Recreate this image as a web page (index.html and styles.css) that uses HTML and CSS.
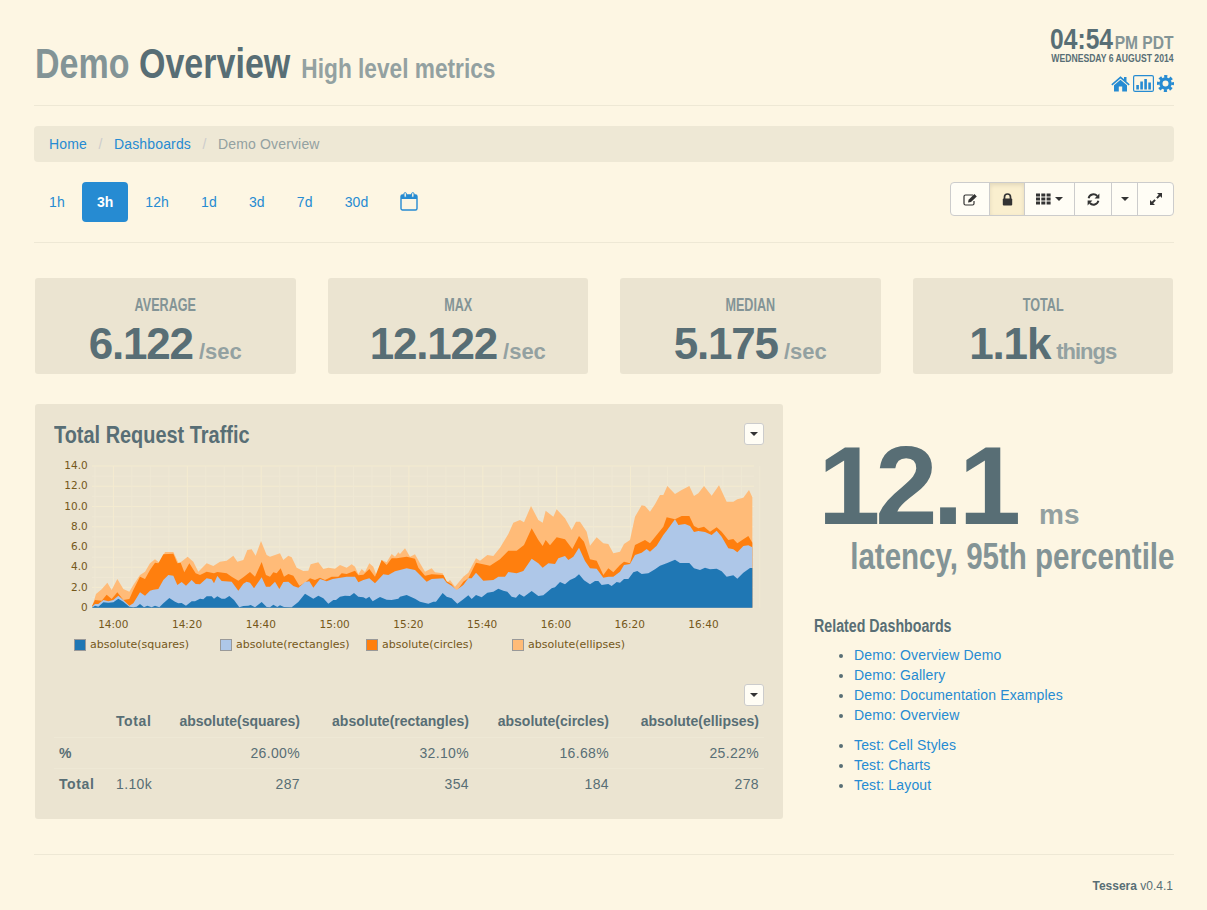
FILE: index.html
```html
<!DOCTYPE html>
<html>
<head>
  <meta charset="utf-8">
  <title>Demo Overview</title>
  <link rel="stylesheet" href="styles.css">
</head>
<body>
  <div id="page">
    <header class="page-head">
      <h1 class="page-title"><span class="muted">Demo</span> Overview <small>High level metrics</small></h1>
      <div class="clock">
        <div class="clock-text">
          <div class="clock-time">04:54<span>PM PDT</span></div>
          <div class="clock-date">WEDNESDAY 6 AUGUST 2014</div>
        </div>
        <div class="clock-icons">
          <svg class="ico-home" width="19" height="17" viewBox="0 0 19 17"><path d="M0.3 9.2 L9.5 1.2 L13 4.2 V2 H15.5 V6.4 L18.7 9.2 L17.7 10.4 L9.5 3.4 L1.3 10.4 Z"/><path d="M3 10.2 L9.5 4.8 L16 10.2 V16.4 H11.2 V11.6 H7.8 V16.4 H3 Z"/></svg>
          <svg class="ico-bars" width="21" height="17" viewBox="0 0 21 17"><rect x="0.6" y="0.6" width="19.8" height="15.8" rx="1.5" fill="none" stroke="#268bd2" stroke-width="1.2"/><rect x="3.3" y="10" width="2.6" height="4.5"/><rect x="7.3" y="6.5" width="2.6" height="8"/><rect x="11.3" y="4" width="2.6" height="10.5"/><rect x="15.3" y="7.5" width="2.6" height="7"/></svg>
          <svg class="ico-cog" width="17" height="17" viewBox="0 0 17 17"><circle cx="8.5" cy="8.5" r="4.6" fill="none" stroke="#268bd2" stroke-width="3.2"/><circle cx="8.5" cy="8.5" r="7.1" fill="none" stroke="#268bd2" stroke-width="2.8" stroke-dasharray="3.1 2.48" stroke-dashoffset="1.55"/></svg>
        </div>
      </div>
    </header>

    <ul class="breadcrumb">
      <li><a href="#">Home</a></li>
      <li><a href="#">Dashboards</a></li>
      <li class="current">Demo Overview</li>
    </ul>

    <div class="toolbar">
      <ul class="pills">
        <li><a href="#">1h</a></li>
        <li class="active"><a href="#">3h</a></li>
        <li><a href="#">12h</a></li>
        <li><a href="#">1d</a></li>
        <li><a href="#">3d</a></li>
        <li><a href="#">7d</a></li>
        <li><a href="#">30d</a></li>
        <li><a href="#" class="cal-link"><svg width="18" height="19" viewBox="0 0 18 19"><rect x="1" y="3" width="16" height="15" rx="1.5" fill="none" stroke="#268bd2" stroke-width="1.4"/><rect x="1" y="3" width="16" height="4" fill="#268bd2"/><rect x="4" y="0.7" width="2.4" height="4.6" rx="1" fill="#fdf6e3" stroke="#268bd2"/><rect x="11.6" y="0.7" width="2.4" height="4.6" rx="1" fill="#fdf6e3" stroke="#268bd2"/></svg></a></li>
      </ul>
      <div class="btn-group">
        <button class="btn w-edit"><svg width="15" height="13" viewBox="0 0 15 13"><path d="M10 2 H2.5 A1.5 1.5 0 0 0 1 3.5 V10.5 A1.5 1.5 0 0 0 2.5 12 H9.5 A1.5 1.5 0 0 0 11 10.5 V8" fill="none" stroke="#333" stroke-width="1.2"/><path d="M5 9.4 L5.6 6.8 L11.4 1 L13.8 3.4 L8 9 Z" fill="#333"/></svg></button>
        <button class="btn w-lock active"><svg width="11" height="13" viewBox="0 0 11 13"><path d="M2.5 6 V4 A3 3 0 0 1 8.5 4 V6" fill="none" stroke="#333" stroke-width="1.7"/><rect x="0.8" y="5.6" width="9.4" height="6.9" rx="1" fill="#333"/></svg></button>
        <button class="btn w-grid"><svg width="15" height="12" viewBox="0 0 15 12"><g fill="#333"><rect x="0" y="0.5" width="4" height="3"/><rect x="5.3" y="0.5" width="4" height="3"/><rect x="10.6" y="0.5" width="4" height="3"/><rect x="0" y="4.5" width="4" height="3"/><rect x="5.3" y="4.5" width="4" height="3"/><rect x="10.6" y="4.5" width="4" height="3"/><rect x="0" y="8.5" width="4" height="3"/><rect x="5.3" y="8.5" width="4" height="3"/><rect x="10.6" y="8.5" width="4" height="3"/></g></svg><span class="caret"></span></button>
        <button class="btn w-refresh"><svg width="13" height="13" viewBox="0 0 13 13"><path d="M1.6 5.2 A5 5 0 0 1 10.2 3" fill="none" stroke="#333" stroke-width="1.9"/><path d="M12.4 0.6 V5.4 H7.6 Z" fill="#333"/><path d="M11.4 7.8 A5 5 0 0 1 2.8 10" fill="none" stroke="#333" stroke-width="1.9"/><path d="M0.6 12.4 V7.6 H5.4 Z" fill="#333"/></svg></button>
        <button class="btn w-caret"><span class="caret"></span></button>
        <button class="btn w-expand"><svg width="12" height="12" viewBox="0 0 12 12"><path d="M7 0 H12 V5 L10.2 3.2 L7.6 5.8 L6.2 4.4 L8.8 1.8 Z" fill="#333"/><path d="M5 12 H0 V7 L1.8 8.8 L4.4 6.2 L5.8 7.6 L3.2 10.2 Z" fill="#333"/></svg></button>
      </div>
    </div>

    <section class="stats">
      <div class="stat"><h3>AVERAGE</h3><div class="stat-value">6.122 <span>/sec</span></div></div>
      <div class="stat"><h3>MAX</h3><div class="stat-value">12.122 <span>/sec</span></div></div>
      <div class="stat"><h3>MEDIAN</h3><div class="stat-value">5.175 <span>/sec</span></div></div>
      <div class="stat"><h3>TOTAL</h3><div class="stat-value">1.1k <span class="things">things</span></div></div>
    </section>

    <div class="main-row">
      <section class="panel">
        <div class="panel-head">
          <h2>Total Request Traffic</h2>
          <button class="mini-btn"><span class="caret"></span></button>
        </div>
        <svg id="traffic-chart" width="710" height="175" viewBox="72 165 2130 525"></svg>
        <div class="legend">
          <span class="legend-item"><i class="swatch c-squares"></i>absolute(squares)</span>
          <span class="legend-item"><i class="swatch c-rectangles"></i>absolute(rectangles)</span>
          <span class="legend-item"><i class="swatch c-circles"></i>absolute(circles)</span>
          <span class="legend-item"><i class="swatch c-ellipses"></i>absolute(ellipses)</span>
        </div>
        <div class="table-tools"><button class="mini-btn"><span class="caret"></span></button></div>
        <table class="summary">
          <thead>
            <tr><th class="col-name"></th><th class="col-total left">Total</th><th class="col-a">absolute(squares)</th><th class="col-b">absolute(rectangles)</th><th class="col-c">absolute(circles)</th><th class="col-d">absolute(ellipses)</th></tr>
          </thead>
          <tbody>
            <tr><th class="left">%</th><td class="left"></td><td>26.00%</td><td>32.10%</td><td>16.68%</td><td>25.22%</td></tr>
            <tr><th class="left">Total</th><td class="left">1.10k</td><td>287</td><td>354</td><td>184</td><td>278</td></tr>
          </tbody>
        </table>
      </section>

      <aside class="side">
        <div class="big-number">12.1 <span>ms</span></div>
        <div class="big-label"><span>latency, 95th percentile</span></div>
        <h4>Related Dashboards</h4>
        <ul class="links">
          <li><a href="#">Demo: Overview Demo</a></li>
          <li><a href="#">Demo: Gallery</a></li>
          <li><a href="#">Demo: Documentation Examples</a></li>
          <li><a href="#">Demo: Overview</a></li>
        </ul>
        <ul class="links">
          <li><a href="#">Test: Cell Styles</a></li>
          <li><a href="#">Test: Charts</a></li>
          <li><a href="#">Test: Layout</a></li>
        </ul>
      </aside>
    </div>

    <footer class="page-foot"><strong>Tessera</strong> v0.4.1</footer>
  </div>
  <script src="chart.js"></script>
</body>
</html>
```

FILE: styles.css
```css
* {
  box-sizing: border-box;
}
body {
  margin: 0;
  background-color: #fdf6e3;
  color: #586e75;
  font-family: "Liberation Sans", Arial, sans-serif;
  font-size: 14px;
  line-height: 20px;
  letter-spacing: 0.15px;
}
a {
  color: #268bd2;
  text-decoration: none;
}
#page {
  width: 1140px;
  margin-left: 34px;
}

/* header */
.page-head {
  display: flex;
  justify-content: space-between;
  height: 106px;
  border-bottom: 1px solid #eee8d5;
}
.page-title {
  margin: 41px 0 0 1px;
  color: #586e75;
  font-size: 42px;
  line-height: 46px;
  font-weight: bold;
  letter-spacing: 0;
  transform: scaleX(0.81);
  transform-origin: left;
}
.page-title .muted {
  color: #839496;
}
.page-title small {
  margin-left: 2px;
  color: #93a1a1;
  font-size: 28px;
}
.clock {
  padding-top: 24px;
  text-align: right;
}
.clock-text {
  font-weight: bold;
  letter-spacing: 0;
  transform: scaleX(0.82);
  transform-origin: right;
}
.clock-time {
  font-size: 30px;
  line-height: 29px;
}
.clock-time span {
  margin-left: 2px;
  color: #839496;
  font-size: 19px;
  line-height: 1;
}
.clock-date {
  font-size: 10.5px;
  line-height: 10px;
}
.clock-icons {
  display: flex;
  justify-content: flex-end;
  gap: 3px;
  margin-top: 12px;
}
.clock-icons svg {
  fill: #268bd2;
}

/* breadcrumb */
.breadcrumb {
  display: flex;
  height: 36px;
  margin: 20px 0;
  padding: 8px 15px;
  list-style: none;
  background: #eee8d5;
  border-radius: 4px;
}
.breadcrumb li + li::before {
  content: "/";
  padding: 0 11.5px;
  color: #ccc;
}
.breadcrumb .current {
  color: #93a1a1;
}

/* time range and buttons */
.toolbar {
  display: flex;
  justify-content: space-between;
  align-items: flex-start;
  height: 61px;
  border-bottom: 1px solid #eee8d5;
}
.pills {
  display: flex;
  gap: 2px;
  margin: 0;
  padding: 0;
  list-style: none;
}
.pills a {
  display: block;
  height: 40px;
  padding: 10px 15px;
  border-radius: 4px;
}
.pills .active a {
  background: #268bd2;
  color: #fff;
  font-weight: bold;
  letter-spacing: 0;
}
.btn-group {
  display: flex;
  height: 34px;
  background: #fffdf5;
  border: 1px solid #ccc;
  border-radius: 4px;
}
.btn {
  display: flex;
  align-items: center;
  justify-content: center;
  gap: 4px;
  padding: 0;
  background: none;
  border: 0;
  border-left: 1px solid #ccc;
}
.btn:first-child {
  border-left: 0;
}
.btn.active {
  background: #faefcf;
  box-shadow: inset 0 2px 4px rgba(0, 0, 0, 0.1);
}
.w-edit { width: 38px; }
.w-lock { width: 35px; }
.w-grid { width: 50px; }
.w-refresh { width: 37px; }
.w-caret { width: 26px; }
.w-expand { width: 36px; }
.caret {
  display: inline-block;
  width: 0;
  height: 0;
  border-top: 4px solid #333;
  border-left: 4px solid transparent;
  border-right: 4px solid transparent;
}

/* stat cards */
.stats {
  display: grid;
  grid-template-columns: repeat(4, 1fr);
  gap: 32px;
  margin-top: 35px;
  padding: 0 1px;
}
.stat {
  height: 96px;
  padding-top: 17px;
  background: #ebe4d1;
  border-radius: 3px;
  text-align: center;
}
.stat h3 {
  margin: 0;
  color: #839496;
  font-size: 18px;
  line-height: 20px;
  letter-spacing: 0;
  transform: scaleX(0.7);
}
.stat-value {
  margin-top: 7px;
  font-size: 44px;
  line-height: 44px;
  font-weight: bold;
  letter-spacing: -1.2px;
  word-spacing: -5px;
}
.stat-value span {
  color: #93a1a1;
  font-size: 22px;
  letter-spacing: 0;
}
.stat-value .things {
  letter-spacing: -1px;
}

/* main row */
.main-row {
  display: flex;
  gap: 31px;
  margin-top: 30px;
  padding-left: 1px;
}
.panel {
  flex: none;
  width: 748px;
  height: 415px;
  padding: 19px 19px 0;
  background: #ebe4d1;
  border-radius: 3px;
}
.panel-head {
  display: flex;
  justify-content: space-between;
  height: 32px;
}
.panel-head h2 {
  margin: 0;
  font-size: 24px;
  line-height: 24px;
  letter-spacing: 0;
  transform: scaleX(0.83);
  transform-origin: left;
}
.mini-btn {
  display: flex;
  align-items: center;
  justify-content: center;
  width: 20px;
  height: 22px;
  padding: 0;
  background: #fffdf5;
  border: 1px solid #ccc;
  border-radius: 3px;
}
#traffic-chart {
  display: block;
}
.chart-label {
  fill: #75581a;
  font-family: "DejaVu Sans", sans-serif;
  font-size: 31.5px;
  letter-spacing: 0;
}
.legend {
  display: flex;
  height: 16px;
  margin-top: 7px;
  padding-left: 20px;
  color: #75581a;
  font-family: "DejaVu Sans", sans-serif;
  font-size: 11px;
  line-height: 16px;
  letter-spacing: 0;
}
.legend-item {
  display: flex;
  align-items: center;
  width: 146px;
}
.swatch {
  width: 12px;
  height: 12px;
  margin-right: 4px;
  border: 1px solid #999;
}
.c-squares { background: #1f77b4; }
.c-rectangles { background: #aec7e8; }
.c-circles { background: #ff7f0e; }
.c-ellipses { background: #ffbb78; }
.table-tools {
  display: flex;
  justify-content: flex-end;
  margin-top: 31px;
}
.summary {
  width: 710px;
  table-layout: fixed;
  border-collapse: collapse;
}
.summary th, .summary td {
  height: 31px;
  padding: 5px;
  text-align: right;
}
.summary th {
  letter-spacing: 0;
}
.summary td {
  letter-spacing: 0.35px;
}
.summary tbody tr {
  border-top: 1px solid #eee8d5;
}
.summary .left {
  text-align: left;
}
.summary th.left {
  letter-spacing: 0.6px;
}
.col-name { width: 57px; }
.col-total { width: 60px; }
.col-a { width: 134px; }
.col-b { width: 169px; }
.col-c { width: 140px; }
.col-d { width: 150px; }

/* right column */
.side {
  flex: 1;
  min-width: 0;
}
.big-number {
  margin: 54px 0 0 4px;
  font-size: 112px;
  line-height: 56px;
  font-weight: bold;
  letter-spacing: -5px;
  word-spacing: -3px;
  white-space: nowrap;
}
.big-number span {
  color: #93a1a1;
  font-size: 28px;
  letter-spacing: 0;
}
.big-label {
  display: flex;
  justify-content: flex-end;
  margin-top: -6px;
  color: #839496;
  font-size: 36px;
  line-height: 40px;
  font-weight: bold;
  letter-spacing: 0;
  white-space: nowrap;
}
.big-label span {
  flex: none;
  transform: scaleX(0.82);
  transform-origin: right;
}
.side h4 {
  margin: 39px 0 9px;
  font-size: 18px;
  line-height: 20px;
  letter-spacing: 0;
  transform: scaleX(0.79);
  transform-origin: left;
}
.links {
  margin: 0 0 10px;
  padding-left: 40px;
}

/* footer */
.page-foot {
  margin-top: 35px;
  height: 56px;
  padding: 21px 1px 0 0;
  border-top: 1px solid #eee8d5;
  font-size: 12px;
  letter-spacing: 0;
  text-align: right;
}
```

FILE: chart.js
```js
// coordinates are in chart units, 3 to the pixel
const BASE = 623;
const SPLIT = 1110;

function shift(list) {
  return list.map(p => [p[0] + SPLIT, p[1]]);
}

const ellipses = [[186,622],[198,582],[215,568],[232,548],[245,570],[262,537],[280,567],[298,575],[310,555],[330,525],[345,515],[360,490],[375,478],[390,490],[405,456],[430,456],[445,488],[452,487],[473,470],[490,485],[505,515],[530,490],[550,498],[570,485],[590,482],[610,467],[622,485],[640,480],[652,450],[665,448],[677,467],[693,423],[710,465],[720,470],[750,460],[760,480],[775,467],[785,472],[800,503],[820,513],[835,512],[842,493],[865,487],[880,507],[895,503],[915,506],[930,495],[950,503],[965,493],[975,500],[985,523],[995,507],[1005,516],[1018,490],[1030,500],[1040,527],[1055,480],[1070,487],[1085,462],[1095,470],[1105,457]]
  .concat(shift([[0,462],[15,445],[30,470],[45,463],[60,490],[75,515],[95,505],[105,517],[128,520],[140,550],[150,540],[165,560],[190,530],[205,518],[228,475],[240,482],[262,465],[280,468],[300,443],[325,402],[340,368],[360,360],[372,367],[393,318],[415,360],[428,368],[437,332],[460,350],[470,328],[495,355],[515,390],[528,365],[540,365],[560,395],[570,437],[590,412],[610,430],[625,432],[640,460],[660,455],[672,432],[690,420],[705,350],[725,316],[735,318],[750,335],[765,313],[780,285],[790,285],[802,258],[825,282],[845,270],[868,258],[882,288],[895,280],[912,258],[935,287],[957,256],[980,305],[1000,305],[1012,298],[1030,293],[1047,270],[1057,292]]));

const circles = [[186,618],[195,600],[215,602],[230,584],[245,597],[262,577],[280,600],[298,597],[310,570],[330,530],[345,537],[360,510],[375,488],[385,490],[400,463],[430,461],[442,490],[452,488],[463,517],[478,490],[497,520],[510,525],[530,515],[552,520],[562,516],[590,520],[605,530],[625,542],[640,532],[660,516],[675,530],[695,486],[708,525],[720,530],[730,517],[740,520],[752,505],[762,530],[775,522],[790,527],[808,557],[825,548],[840,535],[855,540],[870,533],[885,540],[905,530],[925,530],[935,520],[950,522],[975,512],[985,526],[1000,524],[1018,507],[1035,530],[1055,480],[1070,495],[1085,475],[1100,475]]
  .concat(shift([[0,473],[20,470],[45,476],[55,503],[75,527],[95,523],[130,525],[140,544],[155,553],[170,574],[190,545],[205,535],[228,488],[270,497],[300,478],[325,452],[350,452],[372,435],[395,385],[415,420],[428,438],[437,420],[450,436],[470,412],[495,418],[517,447],[537,408],[552,425],[570,478],[590,482],[610,525],[625,505],[640,517],[660,495],[672,485],[690,490],[705,435],[735,420],[750,430],[770,405],[790,380],[800,352],[825,358],[845,348],[868,348],[882,378],[895,385],[912,380],[930,395],[950,382],[965,395],[985,420],[1000,417],[1012,430],[1030,418],[1045,408],[1057,428]]));

const rectangles = [[186,620],[195,612],[205,612],[220,600],[235,604],[250,600],[265,587],[280,600],[298,617],[310,610],[330,577],[345,587],[360,572],[370,569],[385,567],[400,540],[415,525],[430,527],[442,555],[455,546],[468,557],[485,540],[497,552],[510,553],[530,535],[545,538],[552,550],[562,528],[575,543],[605,545],[625,572],[640,551],[650,545],[660,548],[672,565],[695,532],[708,560],[720,560],[735,545],[748,567],[760,546],[775,545],[790,558],[805,563],[825,546],[838,544],[850,563],[870,537],[890,544],[908,537],[950,530],[975,530],[985,547],[1000,540],[1018,535],[1035,550],[1060,523],[1075,525],[1095,514]]
  .concat(shift([[0,510],[20,505],[45,510],[60,525],[80,545],[95,537],[130,535],[140,548],[155,557],[170,570],[190,555],[205,535],[215,535],[228,518],[250,542],[280,540],[295,530],[315,530],[325,516],[350,520],[370,513],[395,476],[415,490],[428,503],[445,490],[465,492],[475,475],[495,468],[505,480],[520,470],[537,443],[555,483],[570,505],[590,506],[610,533],[625,530],[640,530],[660,515],[672,495],[690,492],[705,465],[725,458],[740,447],[750,455],[770,437],[790,405],[800,392],[825,358],[835,375],[855,372],[870,378],[882,396],[895,393],[915,396],[935,405],[950,392],[965,410],[985,445],[1000,448],[1012,457],[1030,438],[1045,436],[1057,442]]));

const squares = [[186,623],[195,617],[205,620],[220,607],[235,608],[250,607],[265,596],[280,605],[298,620],[310,622],[320,620],[330,612],[342,622],[352,617],[365,622],[375,617],[388,622],[400,610],[418,594],[435,605],[445,610],[455,609],[468,617],[485,604],[495,604],[510,596],[520,598],[530,589],[545,589],[552,596],[562,589],[575,596],[585,596],[598,588],[612,600],[628,622],[640,618],[655,617],[662,615],[675,622],[695,606],[710,621],[720,622],[730,614],[742,621],[750,616],[762,621],[785,622],[805,606],[825,581],[850,596],[865,587],[880,595],[895,611],[910,600],[918,600],[930,590],[945,587],[960,588],[972,579],[985,590],[1000,592],[1008,596],[1018,590],[1028,604],[1050,591],[1070,599],[1085,600],[1105,596]]
  .concat(shift([[0,590],[20,585],[45,596],[60,605],[85,611],[100,605],[108,605],[128,579],[140,590],[155,595],[172,611],[190,598],[205,586],[215,597],[228,585],[245,592],[262,578],[280,575],[295,566],[310,572],[322,575],[335,590],[348,593],[358,582],[372,590],[395,573],[415,588],[430,586],[455,565],[465,562],[480,546],[495,553],[510,540],[525,533],[537,523],[552,541],[570,553],[585,543],[595,543],[605,555],[625,552],[635,558],[650,546],[660,548],[672,537],[685,537],[700,517],[712,513],[725,522],[745,520],[765,508],[780,497],[800,490],[825,479],[840,489],[868,489],[882,505],[900,510],[915,503],[930,508],[950,506],[965,514],[980,530],[1000,526],[1012,536],[1030,518],[1050,504],[1057,504]]));

const svg = document.getElementById("traffic-chart");

function add(tag, attrs, text) {
  const el = document.createElementNS("http://www.w3.org/2000/svg", tag);
  Object.keys(attrs).forEach(k => el.setAttribute(k, attrs[k]));
  if (text) el.textContent = text;
  svg.appendChild(el);
}

function line(x1, y1, x2, y2, color) {
  add("line", { x1, y1, x2, y2, stroke: color, "stroke-width": 3 });
}

// grid, a line per unit and per five minutes
for (let i = 0; i <= 14; i++) {
  const y = BASE - i * 30.35;
  line(186, y, 2172, y, i % 2 ? "#efe8d4" : "#f4ebd0");
}
for (let i = 0; i < 37; i++) {
  const x = 195 + i * 55.4;
  line(x, 198, x, BASE, (i - 1) % 4 ? "#efe8d4" : "#f4ebd0");
}

[[ellipses, "#ffbb78"], [circles, "#ff7f0e"], [rectangles, "#aec7e8"], [squares, "#1f77b4"]].forEach(layer => {
  const pts = layer[0].concat([[2167, BASE], [186, BASE]]);
  add("polygon", { points: pts.map(p => p.join(",")).join(" "), fill: layer[1] });
});

["0", "2.0", "4.0", "6.0", "8.0", "10.0", "12.0", "14.0"].forEach((label, i) => {
  add("text", { class: "chart-label", x: 173, y: 633 - i * 60.9, "text-anchor": "end" }, label);
});

["14:00", "14:20", "14:40", "15:00", "15:20", "15:40", "16:00", "16:20", "16:40"].forEach((label, i) => {
  add("text", { class: "chart-label", x: 250 + i * 221.3, y: 683, "text-anchor": "middle" }, label);
});
```
